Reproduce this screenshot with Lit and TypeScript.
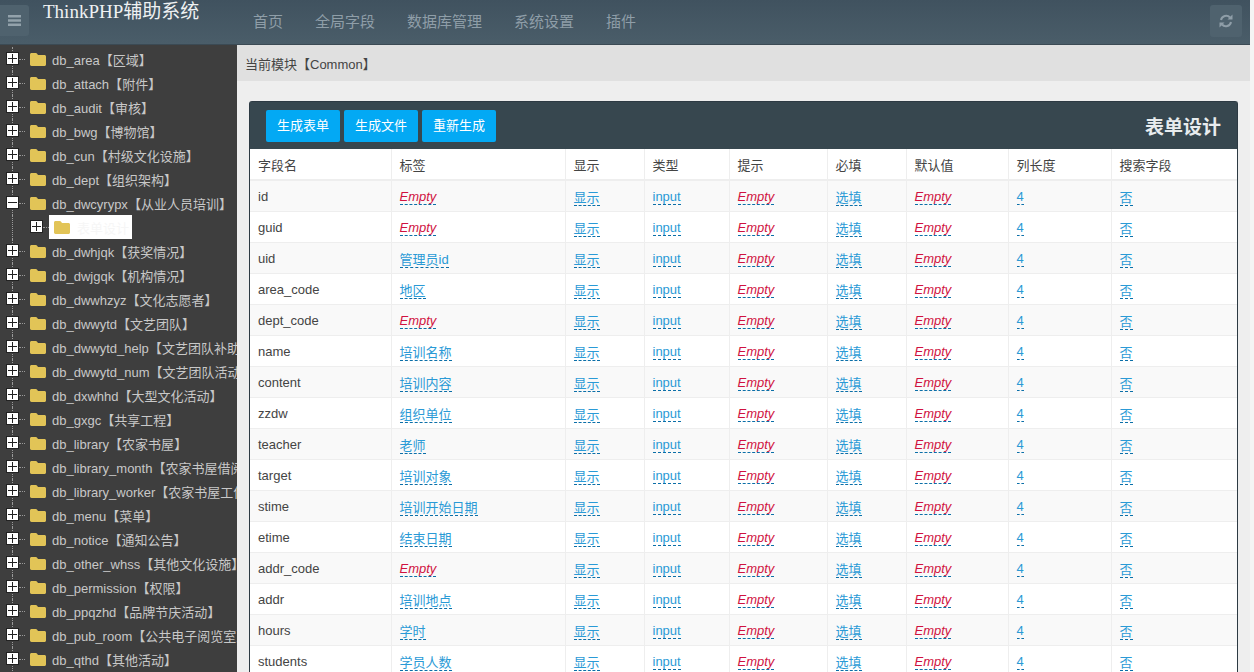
import { LitElement, html, css } from "lit";
import { customElement } from "lit/decorators.js";

const tree: [string, string][] = [
  ["db_area", "区域"], ["db_attach", "附件"], ["db_audit", "审核"], ["db_bwg", "博物馆"],
  ["db_cun", "村级文化设施"], ["db_dept", "组织架构"], ["db_dwcyrypx", "从业人员培训"],
  ["", "表单设计"],
  ["db_dwhjqk", "获奖情况"], ["db_dwjgqk", "机构情况"], ["db_dwwhzyz", "文化志愿者"],
  ["db_dwwytd", "文艺团队"], ["db_dwwytd_help", "文艺团队补助"], ["db_dwwytd_num", "文艺团队活动"],
  ["db_dxwhhd", "大型文化活动"], ["db_gxgc", "共享工程"], ["db_library", "农家书屋"],
  ["db_library_month", "农家书屋借阅"], ["db_library_worker", "农家书屋工作"], ["db_menu", "菜单"],
  ["db_notice", "通知公告"], ["db_other_whss", "其他文化设施"], ["db_permission", "权限"],
  ["db_ppqzhd", "品牌节庆活动"], ["db_pub_room", "公共电子阅览室"], ["db_qthd", "其他活动"],
];

const rows: [string, string][] = [
  ["id", ""], ["guid", ""], ["uid", "管理员id"], ["area_code", "地区"], ["dept_code", ""],
  ["name", "培训名称"], ["content", "培训内容"], ["zzdw", "组织单位"], ["teacher", "老师"],
  ["target", "培训对象"], ["stime", "培训开始日期"], ["etime", "结束日期"], ["addr_code", ""],
  ["addr", "培训地点"], ["hours", "学时"], ["students", "学员人数"],
];

const cols = ["字段名", "标签", "显示", "类型", "提示", "必填", "默认值", "列长度", "搜索字段"];
const widths = [141, 174, 79, 85, 98, 79, 102, 103, 126];
const nav = ["首页", "全局字段", "数据库管理", "系统设置", "插件"];

@customElement("app-root")
export class AppRoot extends LitElement {
  static styles = css`
    :host {
      display: block;
      width: 1254px;
      height: 672px;
      overflow: hidden;
      background: #f4f4f4;
      font-family: "Liberation Sans", "Noto Sans CJK SC", sans-serif;
      font-size: 13px;
      color: #444;
    }
    .page { width: 1250px; height: 672px; display: flex; flex-direction: column; background: #eee; }
    .top {
      height: 45px;
      flex: none;
      display: flex;
      background: linear-gradient(#40525f, #4a5d69);
      border-bottom: 1px solid #3b4a54;
      box-sizing: border-box;
    }
    .burger {
      width: 29px; height: 31px; margin-top: 5px; flex: none;
      background: #4f626e; border-radius: 0 3px 3px 0;
      display: flex; align-items: center; justify-content: center;
    }
    .brand {
      margin-left: 14px; width: 196px; flex: none;
      font-family: "Liberation Serif", "Noto Sans CJK SC", serif;
      font-size: 19px; line-height: 24px; color: #eef1f2; font-weight: 400;
    }
    .nav { display: flex; gap: 32px; margin-left: 14px; flex: 1; font-size: 15px; line-height: 43px; color: #8f9ea8; }
    .refresh {
      width: 32px; height: 32px; margin: 5px 8px 0 0; flex: none; background: #4f626e;
      border-radius: 3px; display: flex; align-items: center; justify-content: center;
    }
    .body { flex: 1; display: flex; min-height: 0; }
    .side { width: 237px; flex: none; background: #3e3e3e; overflow: hidden; padding-top: 2px; box-sizing: border-box; }
    .node {
      position: relative; height: 24px; display: flex; align-items: center; white-space: nowrap;
      padding-left: 6px; color: #c8c8c8; font-size: 13px;
    }
    .node::before {
      content: ""; position: absolute; left: 12px; top: 0; bottom: 0;
      border-left: 1px dotted #9a9a9a;
    }
    .node::after {
      content: ""; position: absolute; left: 19px; top: 12px; width: 6px;
      border-top: 1px dotted #9a9a9a;
    }
    .sw {
      position: relative; z-index: 1; width: 13px; height: 13px; background: #fff; flex: none;
      border: 1px solid #222; box-sizing: border-box; margin-top: -1px;
    }
    .sw::before { content: ""; position: absolute; left: 1px; right: 1px; top: 5px; height: 1px; background: #222; }
    .sw.plus::after { content: ""; position: absolute; top: 1px; bottom: 1px; left: 5px; width: 1px; background: #222; }
    .folder { width: 16px; height: 14px; flex: none; margin-left: 11px; margin-right: 6px; }
    .child { padding-left: 30px; }
    .child::after { left: 43px; }
    .child .sel {
      position: relative; z-index: 1; display: flex; align-items: center; background: #fff;
      height: 24px; width: 83px; margin-left: 6px; color: #f6f6f6; font-size: 13px;
    }
    .child .folder { margin-left: 5px; margin-right: 7px; }
    .main { flex: 1; min-width: 0; display: flex; flex-direction: column; overflow: hidden; }
    .crumb {
      height: 36px; flex: none; background: #e0e0e0; padding-left: 8px; line-height: 39px;
      font-size: 13px; color: #444; box-sizing: border-box;
    }
    .panel {
      margin: 20px 12px 0; background: #fff; border: 1px solid #2d3a43; border-bottom: 0; border-radius: 3px 3px 0 0;
    }
    .phead {
      height: 47px; background: #37474f; display: flex; align-items: center; padding: 0 16px; box-sizing: border-box;
    }
    .btn {
      height: 32px; line-height: 32px; width: 74px; text-align: center; background: #03a9f4; color: #fff;
      font-size: 13px; margin-right: 4px; border-radius: 2px;
    }
    .ptitle { margin-left: auto; color: #e8ecee; font-size: 19px; font-weight: 700; }
    table { width: 100%; border-collapse: collapse; table-layout: fixed; font-size: 13px; }
    th, td { height: 31px; padding: 2px 8px 0; box-sizing: border-box; text-align: left; border-left: 1px solid #eee; border-bottom: 1px solid #eee; white-space: nowrap; color: #444; }
    th { font-weight: 400; border-bottom: 2px solid #eee; padding-top: 0; }
    th:first-child, td:first-child { border-left: 0; }
    tbody tr:nth-child(odd) td { background: #f9f9f9; }
    .ed { color: #2a9ad6; border-bottom: 1px dashed #0b6fa8; }
    .em { color: #d0123f; font-style: italic; }
  `;

  private folder() {
    return html`<svg class="folder" viewBox="0 0 16 14"><path fill="#e2c457" d="M1.5 1h4.2c.7 0 1.2.3 1.6.9l.7 1.1h6.500c.8 0 1.500.7 1.500 1.500v8c0 .8-.7 1.500-1.500 1.500h-13C.7 13.900 0 13.300 0 12.500v-10C0 1.700.7 1 1.500 1z"/></svg>`;
  }

  private ed(t: string) {
    return t ? html`<span class="ed">${t}</span>` : html`<span class="ed em">Empty</span>`;
  }

  render() {
    return html`<div class="page">
      <div class="top">
        <div class="burger">
          <svg width="13" height="11" viewBox="0 0 13 11"><path fill="#93a2ab" d="M0 0h13v2.400H0zM0 4.300h13v2.400H0zM0 8.600h13V11H0z"/></svg>
        </div>
        <div class="brand">ThinkPHP辅助系统</div>
        <div class="nav">${nav.map((n) => html`<span>${n}</span>`)}</div>
        <div class="refresh">
          <svg width="14" height="14" viewBox="0 0 14 14" fill="none" stroke="#8f9ea8" stroke-width="2"><path d="M2 6a5.200 5.200 0 0 1 9-2.500"/><path fill="#8f9ea8" stroke="none" d="M13.500 0.500v5h-5z"/><path d="M12 8a5.200 5.200 0 0 1-9 2.500"/><path fill="#8f9ea8" stroke="none" d="M0.500 13.500v-5h5z"/></svg>
        </div>
      </div>
      <div class="body">
        <div class="side">
          ${tree.map(([a, b], i) =>
            a
              ? html`<div class="node"><span class="sw ${i === 6 ? "" : "plus"}"></span>${this.folder()}<span>${a}【${b}】</span></div>`
              : html`<div class="node child"><span class="sw plus"></span><span class="sel">${this.folder()}${b}</span></div>`
          )}
        </div>
        <div class="main">
          <div class="crumb">当前模块【Common】</div>
          <div class="panel">
            <div class="phead">
              <span class="btn">生成表单</span><span class="btn">生成文件</span><span class="btn">重新生成</span>
              <span class="ptitle">表单设计</span>
            </div>
            <table>
              <colgroup>${widths.map((w) => html`<col style="width:${w}px" />`)}</colgroup>
              <thead><tr>${cols.map((c) => html`<th>${c}</th>`)}</tr></thead>
              <tbody>
                ${rows.map(
                  ([f, l]) => html`<tr>
                    <td>${f}</td><td>${this.ed(l)}</td><td>${this.ed("显示")}</td><td>${this.ed("input")}</td>
                    <td>${this.ed("")}</td><td>${this.ed("选填")}</td><td>${this.ed("")}</td><td>${this.ed("4")}</td><td>${this.ed("否")}</td>
                  </tr>`
                )}
              </tbody>
            </table>
          </div>
        </div>
      </div>
    </div>`;
  }
}
